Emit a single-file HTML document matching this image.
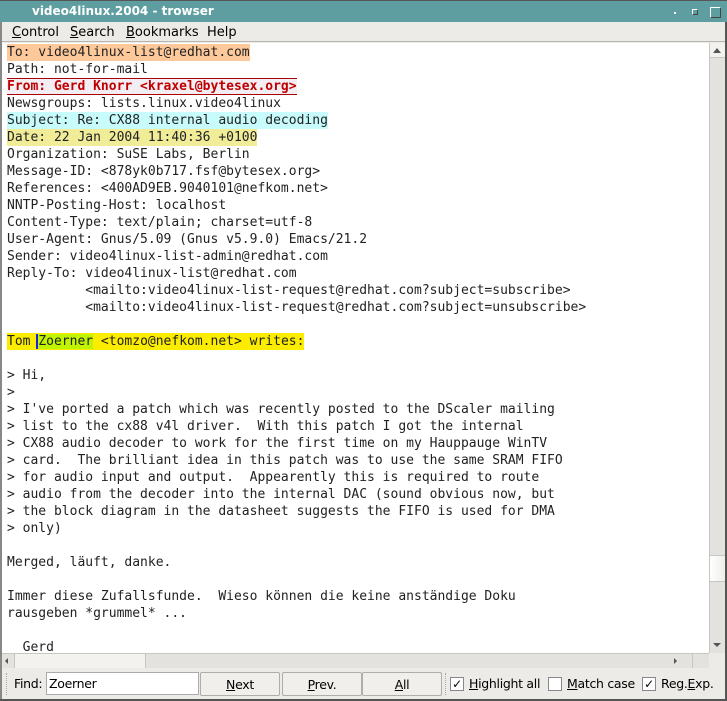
<!DOCTYPE html>
<html><head><style>
*{margin:0;padding:0;box-sizing:border-box}
body{width:727px;height:701px;overflow:hidden;background:#edebe7;position:relative;font-family:"DejaVu Sans","Liberation Sans",sans-serif;}
#title{position:absolute;left:0;top:0;width:727px;height:22px;background:#5f9ea0;border-top:1px solid #555;color:#fff;font-weight:bold;font-size:12px;line-height:21px;padding-left:32px;}
#menu{position:absolute;left:2px;top:22px;width:723px;height:20px;font-size:13px;line-height:21px;color:#000;border-bottom:1px solid #b8b6b2}
#menu span{position:absolute;top:0}
#text{position:absolute;left:2px;top:43px;width:707px;height:610px;background:#fff;overflow:hidden}
pre{position:absolute;left:5px;top:1px;font-family:"DejaVu Sans Mono","Liberation Mono",monospace;font-size:13px;line-height:17px;color:#222}
.hl{display:inline-block;height:17px}
#vs{position:absolute;left:709px;top:43px;width:16px;height:610px;background:#e4e2de;border-left:1px solid #c8c6c2}
#hs{position:absolute;left:2px;top:653px;width:707px;height:15px;background:#e4e2de;border-top:1px solid #c8c6c2}
#find{position:absolute;left:2px;top:669px;width:723px;height:30px;font-size:12.5px;color:#000;letter-spacing:-0.3px}
.btn{position:absolute;top:3px;height:24px;border:1px solid #b0aeaa;border-radius:2px;background:#f1efeb;text-align:center;line-height:24px}
.cb{position:absolute;top:8px;width:14px;height:14px;border:1px solid #888;background:#fff;font-size:12px;line-height:12px;text-align:center}
.lb{position:absolute;top:0;line-height:30px}
u{text-decoration:underline}
</style></head><body>
<div style="position:absolute;left:0;top:0;width:2px;height:701px;background:#888"></div>
<div style="position:absolute;right:0;top:0;width:2px;height:701px;background:#555"></div>
<div style="position:absolute;left:0;bottom:0;width:727px;height:2px;background:#555"></div>
<div id="title">video4linux.2004 - trowser
<div style="position:absolute;left:674px;top:11px;width:2px;height:2px;background:#fff"></div>
<div style="position:absolute;left:692px;top:8px;width:6px;height:6px;border:1px solid #fff;border-right-color:#444;border-bottom-color:#444"></div>
<div style="position:absolute;left:710px;top:6px;width:11px;height:11px;border:1px solid #fff;border-right-color:#444;border-bottom-color:#444"></div>
</div>
<div id="menu">
<span style="left:10px"><u>C</u>ontrol</span>
<span style="left:68px"><u>S</u>earch</span>
<span style="left:124px"><u>B</u>ookmarks</span>
<span style="left:205px">Help</span>
</div>
<div id="text"><pre><span class="hl" style="background:#fdc99a">To: video4linux-list@redhat.com</span>
Path: not-for-mail
<span class="hl" style="background:#f3eef3;color:#c00000;font-weight:bold;border-top:1px solid #a00;border-bottom:1px solid #a00;line-height:15px">From: Gerd Knorr &lt;kraxel@bytesex.org&gt;</span>
Newsgroups: lists.linux.video4linux
<span class="hl" style="background:#c8fcfc">Subject: Re: CX88 internal audio decoding</span>
<span class="hl" style="background:#f0ec98">Date: 22 Jan 2004 11:40:36 +0100</span>
Organization: SuSE Labs, Berlin
Message-ID: &lt;878yk0b717.fsf@bytesex.org&gt;
References: &lt;400AD9EB.9040101@nefkom.net&gt;
NNTP-Posting-Host: localhost
Content-Type: text/plain; charset=utf-8
User-Agent: Gnus/5.09 (Gnus v5.9.0) Emacs/21.2
Sender: video4linux-list-admin@redhat.com
Reply-To: video4linux-list@redhat.com
          &lt;mailto:video4linux-list-request@redhat.com?subject=subscribe&gt;
          &lt;mailto:video4linux-list-request@redhat.com?subject=unsubscribe&gt;

<span class="hl" style="background:#fcec00">Tom <span style="background:#c0f400;border-left:2px solid #2020e0;margin-left:-2px">Zoerner</span> &lt;tomzo@nefkom.net&gt; writes:</span>

&gt; Hi,
&gt;
&gt; I've ported a patch which was recently posted to the DScaler mailing
&gt; list to the cx88 v4l driver.  With this patch I got the internal
&gt; CX88 audio decoder to work for the first time on my Hauppauge WinTV
&gt; card.  The brilliant idea in this patch was to use the same SRAM FIFO
&gt; for audio input and output.  Appearently this is required to route
&gt; audio from the decoder into the internal DAC (sound obvious now, but
&gt; the block diagram in the datasheet suggests the FIFO is used for DMA
&gt; only)

Merged, läuft, danke.

Immer diese Zufallsfunde.  Wieso können die keine anständige Doku
rausgeben *grummel* ...

  Gerd
</pre></div>
<div id="vs">
<div style="position:absolute;left:0;top:0;width:15px;height:15px;background:#f4f2ee;border-bottom:1px solid #c8c6c2"></div>
<div style="position:absolute;left:3px;top:5px;width:0;height:0;border-left:4px solid transparent;border-right:4px solid transparent;border-bottom:5px solid #555"></div>
<div style="position:absolute;left:0;top:512px;width:15px;height:27px;background:linear-gradient(90deg,#fff,#f0eeea);border-top:1px solid #c8c6c2;border-bottom:1px solid #c8c6c2"></div>
<div style="position:absolute;left:3px;top:600px;width:0;height:0;border-left:4px solid transparent;border-right:4px solid transparent;border-top:4px solid #555"></div>
</div>
<div id="hs">
<div style="position:absolute;left:3px;top:4px;border-top:3px solid transparent;border-bottom:3px solid transparent;border-right:3px solid #555"></div>
<div style="position:absolute;left:12px;top:0;width:132px;height:14px;background:#f4f2ee;border-right:1px solid #c8c6c2;border-left:1px solid #c8c6c2"></div>
<div style="position:absolute;left:690px;top:0;width:17px;height:14px;border-left:1px solid #c8c6c2"></div>
<div style="position:absolute;left:672px;top:4px;border-top:3px solid transparent;border-bottom:3px solid transparent;border-left:3px solid #555"></div>
</div>
<div id="find">
<div style="position:absolute;left:4px;top:4px;width:2px;height:22px;border-left:1px dotted #aaa"></div>
<span class="lb" style="left:12px">Find:</span>
<div style="position:absolute;left:44px;top:3px;width:153px;height:23px;background:#fff;border:1px solid #aaa;padding-left:2px;line-height:21px">Zoerner</div>
<div class="btn" style="left:198px;width:80px"><u>N</u>ext</div>
<div class="btn" style="left:280px;width:80px"><u>P</u>rev.</div>
<div class="btn" style="left:360px;width:80px"><u>A</u>ll</div>
<div style="position:absolute;left:443px;top:4px;height:22px;border-left:1px dotted #aaa"></div>
<div class="cb" style="left:448px">✓</div>
<span class="lb" style="left:467px"><u>H</u>ighlight all</span>
<div class="cb" style="left:546px"></div>
<span class="lb" style="left:565px"><u>M</u>atch case</span>
<div class="cb" style="left:640px">✓</div>
<span class="lb" style="left:659px">Reg.<u>E</u>xp.</span>
</div>
</body></html>
